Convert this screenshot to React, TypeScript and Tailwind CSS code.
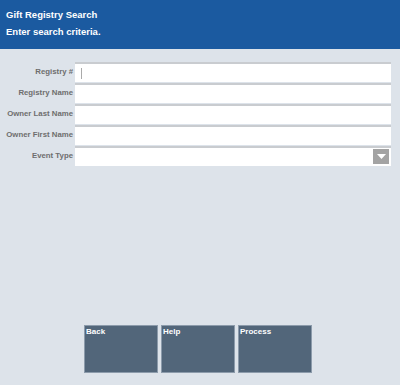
import React from "react";

const fields = ["Registry #", "Registry Name", "Owner Last Name", "Owner First Name", "Event Type"];

export default function App() {
  return (
    <div className="w-[400px] h-[385px] bg-[#dde3ea] flex flex-col" style={{ fontFamily: '"Liberation Sans", Arial, sans-serif' }}>
      <div className="h-[49px] bg-[#1b5aa0] text-white font-bold text-[9.5px] px-[6px] pt-[10px] flex flex-col gap-[7px] leading-[10px]">
        <div>Gift Registry Search</div>
        <div>Enter search criteria.</div>
      </div>
      <div className="flex flex-col gap-[1px] pt-[13px] pr-[9px]">
        {fields.map((f, i) => (
          <div key={f} className="flex items-center h-[20px]">
            <div className="w-[75px] pr-[2px] text-right text-[7.8px] font-bold text-[#6e6e6e]">{f}</div>
            <div className="flex-1 h-[20px] bg-white border-t-2 border-[#c9ccd0] relative flex items-center">
              {i === 0 && <div className="ml-[6px] w-[1px] h-[11px] bg-[#aaa]" />}
              {i === 4 && (
                <div className="absolute right-[2px] top-[1px] w-[16px] h-[15px] bg-[#a3a3a3] flex items-center justify-center">
                  <svg width="9" height="5" viewBox="0 0 9 5"><polygon points="0,0 9,0 4.5,5" fill="#fff" /></svg>
                </div>
              )}
            </div>
          </div>
        ))}
      </div>
      <div className="flex-1" />
      <div className="flex gap-[3px] pl-[84px] mb-[12px]">
        {["Back", "Help", "Process"].map((b) => (
          <div key={b} className="w-[74px] h-[48px] bg-[#52667a] border border-[#8c9bab] text-white text-[8px] font-bold px-[1px] pt-[1px] leading-[10px]">
            {b}
          </div>
        ))}
      </div>
    </div>
  );
}
